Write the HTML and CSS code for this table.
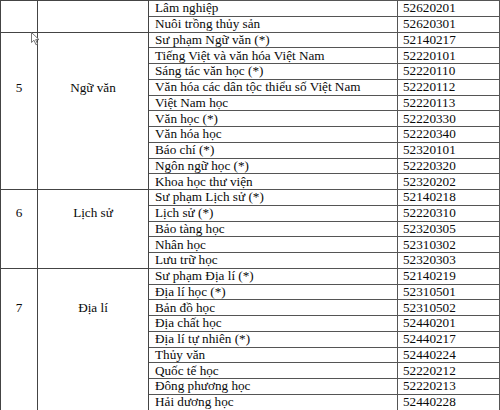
FILE: index.html
```html
<!DOCTYPE html>
<html lang="vi">
<head>
<meta charset="utf-8">
<link rel="stylesheet" href="styles.css">
</head>
<body>
<div class="page">
<table class="majors">
<colgroup><col class="c-no"><col class="c-group"><col class="c-name"><col class="c-code"></colgroup>
<tbody>
<tr><td class="grp" rowspan="2"></td><td class="grp" rowspan="2"></td><td class="name">Lâm nghiệp</td><td class="code">52620201</td></tr>
<tr><td class="name">Nuôi trồng thủy sản</td><td class="code">52620301</td></tr>
<tr class="start"><td class="grp off3" rowspan="10">5</td><td class="grp off3" rowspan="10">Ngữ văn</td><td class="name">Sư phạm Ngữ văn (*)</td><td class="code">52140217</td></tr>
<tr><td class="name">Tiếng Việt và văn hóa Việt Nam</td><td class="code">52220101</td></tr>
<tr><td class="name">Sáng tác văn học (*)</td><td class="code">52220110</td></tr>
<tr><td class="name">Văn hóa các dân tộc thiểu số Việt Nam</td><td class="code">52220112</td></tr>
<tr><td class="name">Việt Nam học</td><td class="code">52220113</td></tr>
<tr><td class="name">Văn học (*)</td><td class="code">52220330</td></tr>
<tr><td class="name">Văn hóa học</td><td class="code">52220340</td></tr>
<tr><td class="name">Báo chí (*)</td><td class="code">52320101</td></tr>
<tr><td class="name">Ngôn ngữ học (*)</td><td class="code">52220320</td></tr>
<tr><td class="name">Khoa học thư viện</td><td class="code">52320202</td></tr>
<tr class="start"><td class="grp off1" rowspan="5">6</td><td class="grp off1" rowspan="5">Lịch sử</td><td class="name">Sư phạm Lịch sử (*)</td><td class="code">52140218</td></tr>
<tr><td class="name">Lịch sử (*)</td><td class="code">52220310</td></tr>
<tr><td class="name">Bảo tàng học</td><td class="code">52320305</td></tr>
<tr><td class="name">Nhân học</td><td class="code">52310302</td></tr>
<tr><td class="name">Lưu trữ học</td><td class="code">52320303</td></tr>
<tr class="start"><td class="grp off2" rowspan="9">7</td><td class="grp off2" rowspan="9">Địa lí</td><td class="name">Sư phạm Địa lí (*)</td><td class="code">52140219</td></tr>
<tr><td class="name">Địa lí học (*)</td><td class="code">52310501</td></tr>
<tr><td class="name">Bản đồ học</td><td class="code">52310502</td></tr>
<tr><td class="name">Địa chất học</td><td class="code">52440201</td></tr>
<tr><td class="name">Địa lí tự nhiên (*)</td><td class="code">52440217</td></tr>
<tr><td class="name">Thủy văn</td><td class="code">52440224</td></tr>
<tr><td class="name">Quốc tế học</td><td class="code">52220212</td></tr>
<tr><td class="name">Đông phương học</td><td class="code">52220213</td></tr>
<tr><td class="name">Hải dương học</td><td class="code">52440228</td></tr>
</tbody>
</table>
<svg class="cursor" width="9" height="14" viewBox="0 0 9 14"><path d="M0.5 0.5 L0.5 10.5 L3 8.2 L5 12.8 L6.6 12.1 L4.7 7.6 L8 7.6 Z" fill="#fff" stroke="#666" stroke-width="0.9" stroke-linejoin="round"/></svg>
</div>
</body>
</html>
```

FILE: styles.css
```css
html, body {
  margin: 0;
  padding: 0;
  background: #fff;
}
.page {
  position: relative;
  width: 500px;
  height: 410px;
  overflow: hidden;
}
.majors {
  border-collapse: collapse;
  table-layout: fixed;
  width: 499px;
  font-family: "Liberation Serif", "Times New Roman", serif;
  font-size: 13.2px;
  color: #0a0a0a;
}
.c-no { width: 37px; }
.c-group { width: 111px; }
.c-name { width: 249px; }
.c-code { width: 102px; }
.majors tr { height: 15.75px; }
.majors td {
  border: 1px solid #555;
  padding: 0 5px;
  line-height: 14px;
  white-space: nowrap;
  overflow: hidden;
  vertical-align: middle;
}
.majors tr.start td { border-top-color: #333; }
.majors td.grp {
  text-align: center;
  vertical-align: top;
  padding-top: 0;
  border-color: #444;
}
.majors td.grp.off1 { padding-top: 16px; }
.majors td.grp.off2 { padding-top: 32px; }
.majors td.grp.off3 { padding-top: 48px; }
.majors td.name { padding-left: 6px; }
.majors td.code { padding-left: 5px; }
.cursor {
  position: absolute;
  left: 31px;
  top: 32px;
}
```
